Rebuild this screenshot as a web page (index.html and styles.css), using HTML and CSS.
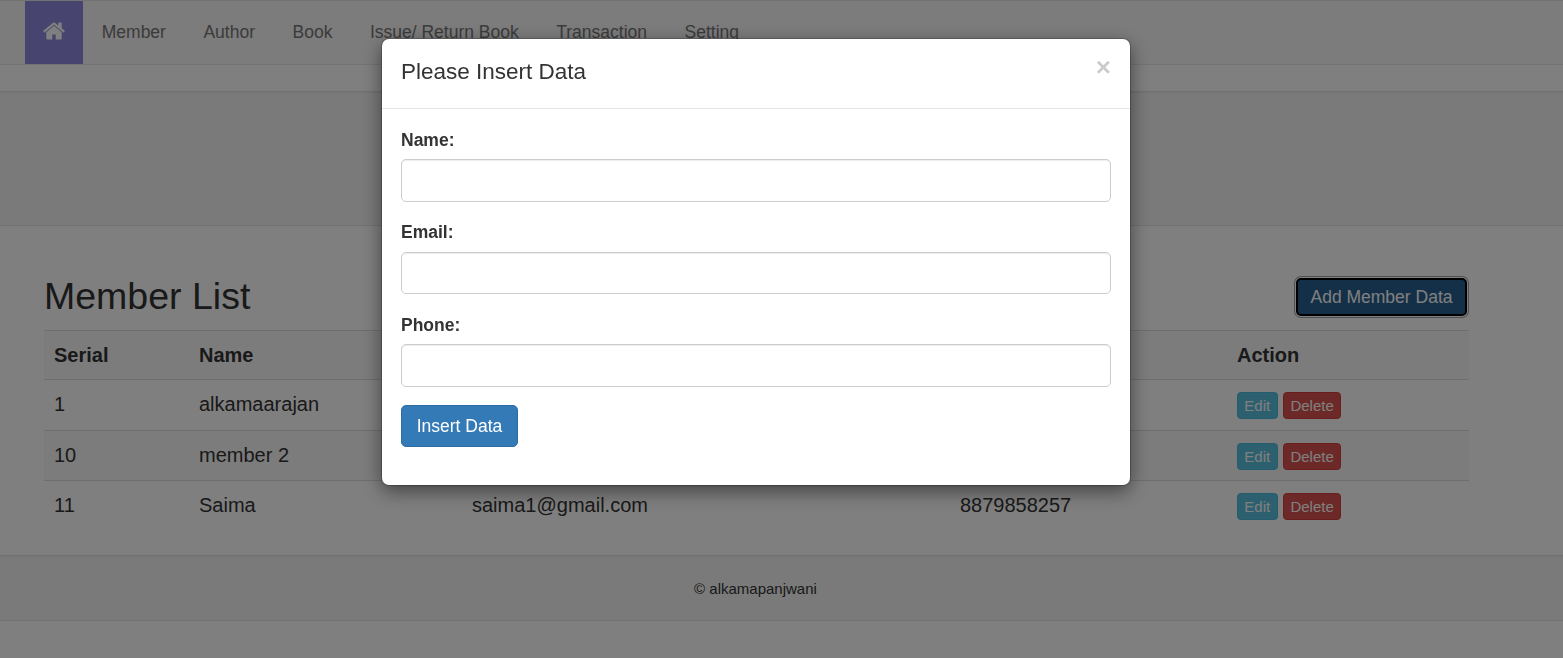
FILE: index.html
```html
<!DOCTYPE html>
<html lang="en">
<head>
<meta charset="utf-8">
<title>Member List</title>
<link rel="stylesheet" href="styles.css">
</head>
<body>
<nav class="navbar">
  <a class="nav-home" href="#" aria-label="Home">
    <svg class="home-icon" viewBox="0 0 1792 1792"><path d="M1472 992v480q0 26-19 45t-45 19h-384v-384h-256v384h-384q-26 0-45-19t-19-45v-480q0-1 .5-3t.5-3l575-474 575 474q1 2 1 6zm223-69l-62 74q-8 9-21 11h-3q-13 0-21-7l-692-577-692 577q-12 8-24 7-13-2-21-11l-62-74q-8-10-7-23.500t11-21.500l719-599q32-26 76-26t76 26l244 204v-195q0-14 9-23t23-9h192q14 0 23 9t9 23v408l219 182q10 8 11 21.500t-7 23.500z"/></svg>
  </a>
  <a class="nav-link" href="#">Member</a>
  <a class="nav-link" href="#">Author</a>
  <a class="nav-link" href="#">Book</a>
  <a class="nav-link" href="#">Issue/ Return Book</a>
  <a class="nav-link" href="#">Transaction</a>
  <a class="nav-link" href="#">Setting</a>
</nav>
<div class="jumbotron"></div>
<main class="content">
  <div class="title-row">
    <h2 class="page-title">Member List</h2>
    <button class="btn btn-add" type="button">Add Member Data</button>
  </div>
  <table class="members">
    <colgroup>
      <col class="col-serial"><col class="col-name"><col class="col-email"><col class="col-phone"><col class="col-action">
    </colgroup>
    <tbody>
      <tr><th>Serial</th><th>Name</th><th>Email</th><th>Phone</th><th>Action</th></tr>
      <tr><td>1</td><td>alkamaarajan</td><td>alkama@gmail.com</td><td>8878858257</td><td><a class="btn-xs btn-edit" href="#">Edit</a> <a class="btn-xs btn-delete" href="#">Delete</a></td></tr>
      <tr><td>10</td><td>member 2</td><td>member2@gmail.com</td><td>8878858258</td><td><a class="btn-xs btn-edit" href="#">Edit</a> <a class="btn-xs btn-delete" href="#">Delete</a></td></tr>
      <tr><td>11</td><td>Saima</td><td>saima1@gmail.com</td><td>8879858257</td><td><a class="btn-xs btn-edit" href="#">Edit</a> <a class="btn-xs btn-delete" href="#">Delete</a></td></tr>
    </tbody>
  </table>
</main>
<footer class="footer">© alkamapanjwani</footer>

<div class="backdrop"></div>
<div class="modal">
  <div class="modal-header">
    <h4 class="modal-title">Please Insert Data</h4>
    <span class="close">×</span>
  </div>
  <form class="modal-body">
    <div class="form-group">
      <label class="form-label" for="name">Name:</label>
      <input class="form-input" id="name" type="text">
    </div>
    <div class="form-group">
      <label class="form-label" for="email">Email:</label>
      <input class="form-input" id="email" type="text">
    </div>
    <div class="form-group">
      <label class="form-label" for="phone">Phone:</label>
      <input class="form-input" id="phone" type="text">
    </div>
    <button class="btn btn-insert" type="button">Insert Data</button>
  </form>
</div>
</body>
</html>
```
FILE: styles.css
```css
* { box-sizing: border-box; }
html, body { margin: 0; height: 100%; }
body {
  background: #fff;
  color: #333;
  font-family: "Liberation Sans", Arial, sans-serif;
  font-size: 17.5px;
  line-height: 25px;
  overflow: hidden;
}
a { text-decoration: none; }

.navbar {
  display: flex;
  height: 65px;
  padding-left: 25px;
  background: #f8f8f8;
  border-top: 1px solid #e7e7e7;
  border-bottom: 1px solid #e7e7e7;
}
.nav-home {
  display: flex;
  align-items: center;
  justify-content: center;
  width: 58px;
  background: #8e88e0;
}
.home-icon { width: 24px; height: 24px; fill: #fff; margin-top: -4px; }
.nav-link {
  display: flex;
  align-items: center;
  padding: 0 18.75px;
  color: #777;
}

.jumbotron {
  height: 135px;
  margin-top: 25.5px;
  background: #f5f5f5;
  border-top: 1px solid #e3e3e3;
  border-bottom: 1px solid #e3e3e3;
  box-shadow: inset 0 1px 1px rgba(0, 0, 0, .05);
}

.content { padding: 50px 94px 0 44px; }
.title-row {
  display: flex;
  justify-content: space-between;
  align-items: flex-start;
  height: 54px;
}
.page-title {
  margin: 0;
  font-size: 37.5px;
  font-weight: 500;
  line-height: 41px;
}
.btn {
  font-family: inherit;
  font-size: 17.5px;
  line-height: 25px;
  border: 1px solid transparent;
  border-radius: 5px;
  color: #fff;
}
.btn-add {
  width: 171px;
  height: 38px;
  margin: 2px 2px 0 0;
  padding: 2px 0 0;
  background: #286090;
  border: 2px solid #000;
  box-shadow: 0 0 0 1px #fff, 0 0 0 2px #a0a0a0;
}
.btn-insert {
  width: 117px;
  height: 42px;
  padding: 1px 0 0;
  background: #337ab7;
  border-color: #2e6da4;
}

.members { width: 1425px; border-collapse: collapse; table-layout: fixed; }
.col-serial { width: 145px; }
.col-name { width: 273px; }
.col-email { width: 488px; }
.col-phone { width: 277px; }
.col-action { width: 242px; }
.members th, .members td {
  padding: 10.5px 10px 8.5px;
  line-height: 29px;
  font-size: 20px;
  text-align: left;
  vertical-align: top;
  border-top: 1px solid #ddd;
  color: #333;
}
.members th { font-weight: 700; height: 49px; }
.members td { height: 50px; }
.members tr:nth-child(2) td { height: 51px; }
.members tr:nth-child(odd) { background: #f9f9f9; }

.btn-xs {
  display: inline-block;
  padding: 1px 0;
  font-size: 15px;
  line-height: 23px;
  height: 27px;
  border: 1px solid;
  border-radius: 3.75px;
  color: #fff;
  text-align: center;
  vertical-align: middle;
}
.btn-edit { width: 40.5px; background: #5bc0de; border-color: #46b8da; }
.btn-delete { width: 58px; background: #d9534f; border-color: #d43f3a; }

.footer {
  height: 66px;
  margin-top: 25px;
  padding-right: 52px;
  background: #f5f5f5;
  border-top: 1px solid #e3e3e3;
  border-bottom: 1px solid #e3e3e3;
  box-shadow: inset 0 1px 1px rgba(0, 0, 0, .05);
  display: flex;
  align-items: center;
  justify-content: center;
  font-size: 15px;
}

.backdrop {
  position: fixed;
  inset: 0;
  background: rgba(0, 0, 0, .5);
}
.modal {
  position: fixed;
  top: 39px;
  left: 382px;
  width: 748px;
  height: 446px;
  background: #fff;
  border-radius: 7px;
  box-shadow: 0 0 0 1px rgba(0, 0, 0, .2), 0 6px 19px rgba(0, 0, 0, .5);
}
.modal-header {
  position: relative;
  height: 70px;
  padding: 19px;
  border-bottom: 1px solid #e5e5e5;
}
.modal-title {
  margin: 0;
  font-size: 22.5px;
  font-weight: 500;
  line-height: 28px;
}
.close {
  position: absolute;
  top: 14px;
  right: 19px;
  font-size: 26px;
  font-weight: 700;
  line-height: 28px;
  color: #000;
  opacity: .2;
}
.modal-body { padding: 18.6px 19px 19px; }
.form-group { margin-bottom: 18.2px; }
.form-label {
  display: block;
  font-weight: 700;
  font-size: 17.5px;
  line-height: 25px;
  margin-bottom: 6.8px;
}
.form-input {
  display: block;
  width: 100%;
  height: 42.5px;
  border: 1px solid #ccc;
  border-radius: 5px;
  box-shadow: inset 0 1px 1px rgba(0, 0, 0, .075);
}
```
